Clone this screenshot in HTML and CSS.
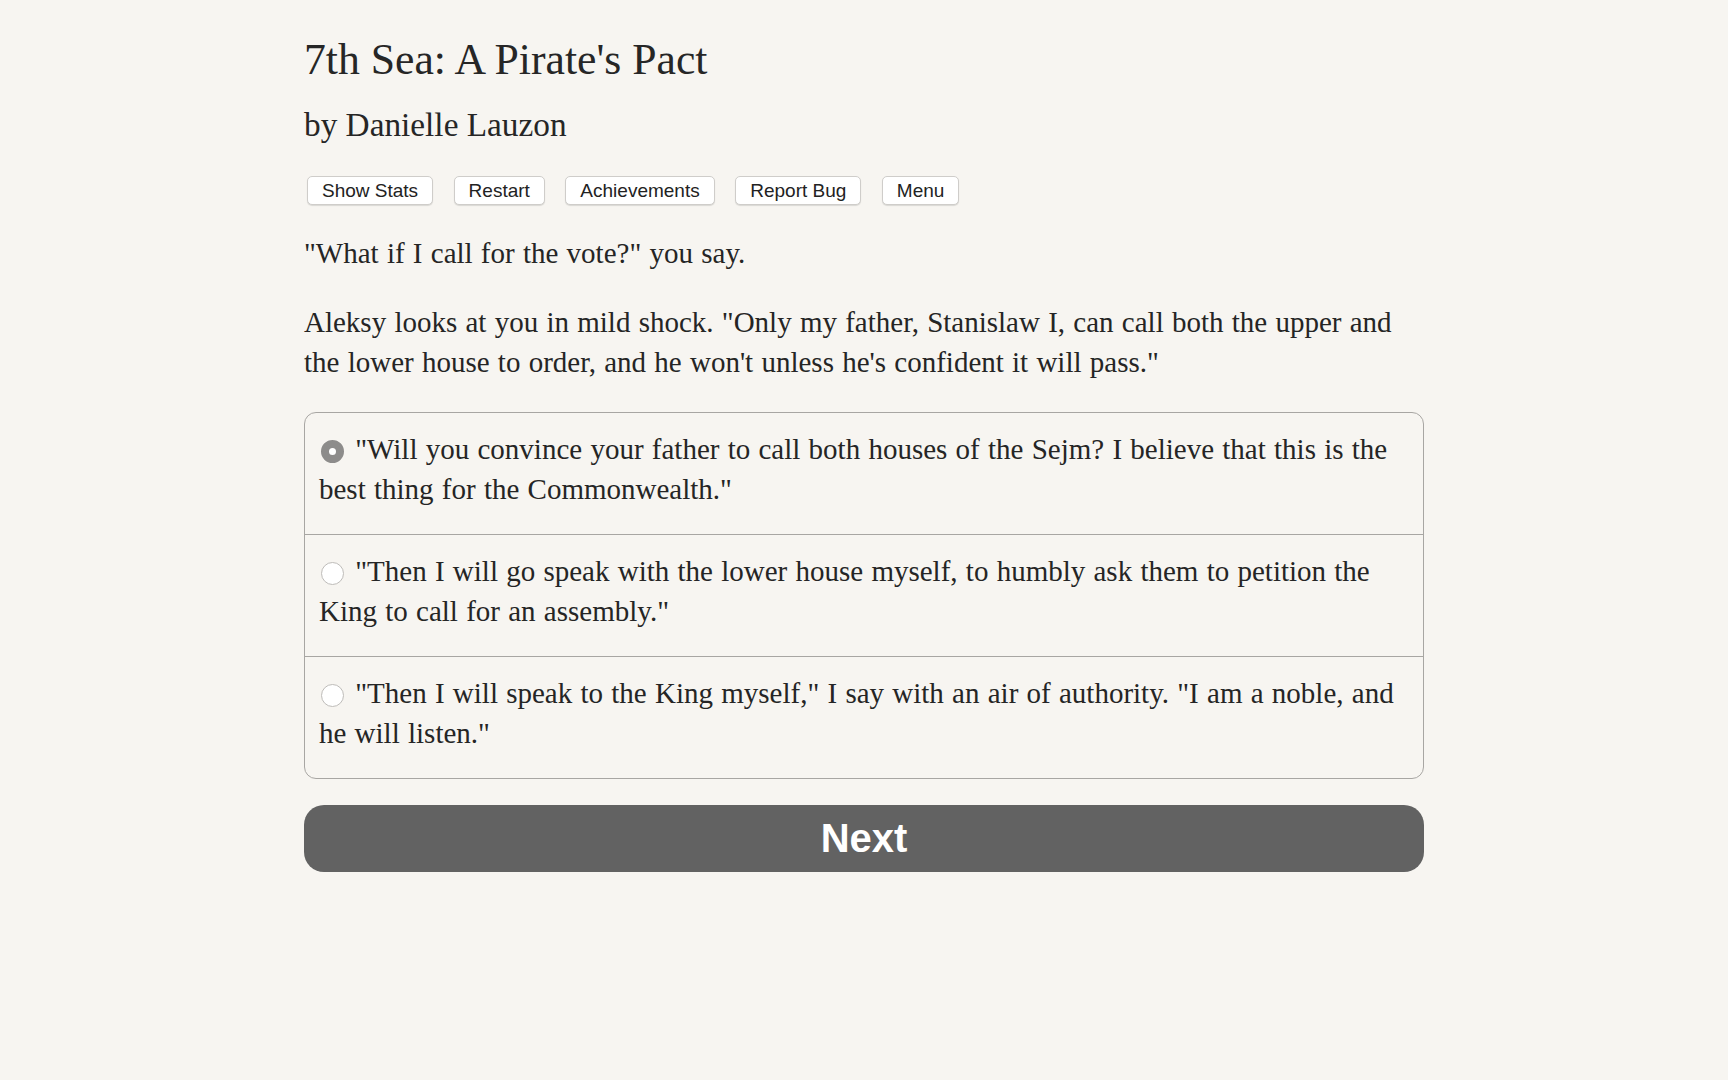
FILE: index.html
```html
<!DOCTYPE html>
<html lang="en">
<head>
<meta charset="utf-8">
<title>7th Sea: A Pirate's Pact</title>
<link rel="stylesheet" href="styles.css">
</head>
<body>
<main class="page">
  <h1 class="title">7th Sea: A Pirate's Pact</h1>
  <h2 class="author">by Danielle Lauzon</h2>
  <nav class="toolbar">
    <button class="tool-btn" type="button">Show Stats</button>
    <button class="tool-btn" type="button">Restart</button>
    <button class="tool-btn" type="button">Achievements</button>
    <button class="tool-btn" type="button">Report Bug</button>
    <button class="tool-btn" type="button">Menu</button>
  </nav>
  <p class="para">"What if I call for the vote?" you say.</p>
  <p class="para">Aleksy looks at you in mild shock. "Only my father, Stanislaw I, can call both the upper and the lower house to order, and he won't unless he's confident it will pass."</p>
  <form class="choices">
    <label class="choice"><input class="radio" type="radio" name="c" checked> "Will you convince your father to call both houses of the Sejm? I believe that this is the best thing for the Commonwealth."</label>
    <label class="choice"><input class="radio" type="radio" name="c"> "Then I will go speak with the lower house myself, to humbly ask them to petition the King to call for an assembly."</label>
    <label class="choice"><input class="radio" type="radio" name="c"> "Then I will speak to the King myself," I say with an air of authority. "I am a noble, and he will listen."</label>
  </form>
  <button class="next" type="button">Next</button>
</main>
</body>
</html>
```

FILE: styles.css
```css
html, body {
  margin: 0;
  padding: 0;
  background: #f7f5f1;
}
body {
  color: #252525;
  font-family: "Liberation Serif", "Times New Roman", serif;
  font-size: 29px;
  line-height: 40.5px;
  word-spacing: 1px;
}
.page {
  width: 1120px;
  margin: 0 auto;
  padding-top: 34px;
}
.title {
  margin: 0;
  font-weight: normal;
  font-size: 43.7px;
  line-height: 50px;
  word-spacing: 0;
  color: #262626;
}
.author {
  margin: 21px 0 0;
  font-weight: normal;
  font-size: 33.3px;
  line-height: 40px;
  word-spacing: 0;
  color: #262626;
}
.toolbar {
  display: flex;
  gap: 20.5px;
  margin: 31px 0 0;
  padding-left: 3px;
}
.tool-btn {
  font-family: "Liberation Sans", Arial, sans-serif;
  font-size: 19px;
  line-height: 21px;
  word-spacing: 0;
  height: 29px;
  padding: 3px 14px;
  color: #222;
  background: #fff;
  border: 1px solid #cfcdca;
  border-radius: 5px;
  box-shadow: 0 1px 1px rgba(0,0,0,0.12);
}
.para {
  margin: 28px 0 0;
}
.choices {
  margin: 29px 0 0;
  border: 1px solid #a8a6a3;
  border-radius: 12px;
  overflow: hidden;
}
.choice {
  display: block;
  padding: 16px 14px 24px;
  border-top: 1px solid #a8a6a3;
}
.choice:first-child {
  border-top: none;
}
.radio {
  appearance: none;
  -webkit-appearance: none;
  display: inline-block;
  box-sizing: border-box;
  width: 23px;
  height: 23px;
  margin: 0 3px 0 2px;
  vertical-align: -4px;
  border: 1px solid #bebcb9;
  border-radius: 50%;
  background: #fff;
}
.radio:checked {
  border: 8.5px solid #8d8c8b;
  background: #fff;
}
.next {
  display: block;
  width: 100%;
  height: 67px;
  margin: 26px 0 0;
  border: none;
  border-radius: 20px;
  background: #626262;
  color: #fff;
  font-family: "Liberation Sans", Arial, sans-serif;
  font-weight: bold;
  font-size: 40px;
  word-spacing: 0;
}
```
